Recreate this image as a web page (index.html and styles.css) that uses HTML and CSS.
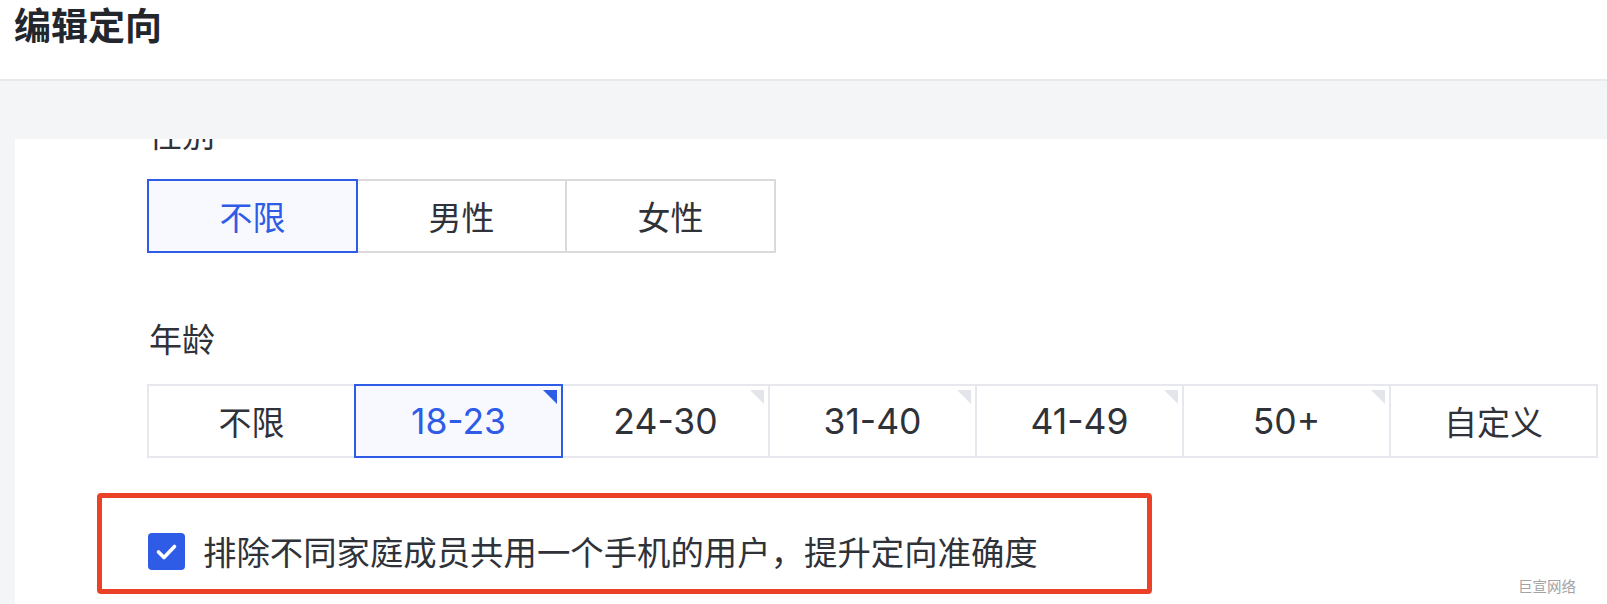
FILE: index.html
```html
<!DOCTYPE html>
<html lang="zh-CN">
<head>
<meta charset="utf-8">
<title>编辑定向</title>
<link rel="stylesheet" href="styles.css">
</head>
<body>
<header class="header">
  <h1 class="title">编辑定向</h1>
</header>
<main class="main">
  <section class="panel">
    <div class="field-label first">性别</div>
    <div class="btn-group gender">
      <div class="opt selected">不限</div>
      <div class="opt">男性</div>
      <div class="opt">女性</div>
    </div>
    <div class="field-label second">年龄</div>
    <div class="btn-group age">
      <div class="opt">不限</div>
      <div class="opt num selected tagged">18-23</div>
      <div class="opt num tagged">24-30</div>
      <div class="opt num tagged">31-40</div>
      <div class="opt num tagged">41-49</div>
      <div class="opt num tagged">50+</div>
      <div class="opt">自定义</div>
    </div>
    <div class="check-row">
      <span class="checkbox">
        <svg viewBox="0 0 37 37" width="37" height="37"><polyline points="10.5,19 16,24.5 26.5,13.5" fill="none" stroke="#fff" stroke-width="3.6" stroke-linecap="round" stroke-linejoin="round"/></svg>
      </span>
      <span class="check-text">排除不同家庭成员共用一个手机的用户，提升定向准确度</span>
    </div>
  </section>
  <div class="watermark">巨宣网络</div>
</main>
</body>
</html>
```
FILE: styles.css
```css
html, body {
  margin: 0;
  padding: 0;
  height: 100%;
  overflow: hidden;
}
body {
  background: #f4f5f7;
  font-family: "Noto Sans CJK SC", sans-serif;
  color: #2f3238;
  display: flex;
  flex-direction: column;
}
.header {
  background: #fff;
  height: 79px;
  border-bottom: 2px solid #e8e9ed;
  padding-left: 14px;
  flex: none;
}
.title {
  margin: 0;
  font-family: "Noto Sans CJK SC", sans-serif;
  font-size: 37px;
  font-weight: 700;
  line-height: 48px;
  color: #23262c;
}
.main {
  flex: 1;
  padding: 58px 0 0 15px;
  display: flex;
  position: relative;
  min-height: 0;
}
.panel {
  flex: 1;
  background: #fff;
  overflow: hidden;
  padding-left: 132px;
}
.field-label {
  font-size: 33px;
  line-height: 44px;
  color: #2f3238;
  padding-left: 2px;
}
.field-label.first {
  margin-top: -28px;
}
.field-label.second {
  margin-top: 63px;
}
.btn-group {
  display: flex;
  margin-top: 24px;
}
.opt {
  position: relative;
  box-sizing: border-box;
  height: 74px;
  border: 2px solid #e6e8ed;
  background: #fff;
  display: flex;
  align-items: center;
  justify-content: center;
  font-size: 33px;
  color: #2f3238;
  flex: none;
}
.opt.num {
  font-family: "Inter", "Noto Sans CJK SC", sans-serif;
  font-size: 35.5px;
}
.opt + .opt {
  margin-left: -2px;
}
.gender .opt {
  width: 211px;
  border-color: #dadadd;
}
.age .opt {
  width: 209px;
}
.opt.selected {
  border-color: #2f5ce6;
  background: #f7f9ff;
  color: #2f5ce6;
  z-index: 1;
}
.opt.tagged::after {
  content: "";
  position: absolute;
  top: 4px;
  right: 4px;
  width: 0;
  height: 0;
  border-top: 14px solid #e3e5ea;
  border-left: 14px solid transparent;
}
.opt.selected.tagged::after {
  border-top-color: #2f5ce6;
}
.check-row {
  margin-top: 35px;
  margin-left: -50px;
  width: 1055px;
  box-sizing: border-box;
  border: 5px solid #eb4127;
  border-radius: 4px;
  padding: 31px 0 16px 46px;
  display: flex;
  align-items: center;
}
.checkbox {
  width: 37px;
  height: 37px;
  border-radius: 4px;
  background: #2f5ce6;
  display: flex;
  flex: none;
}
.check-text {
  margin-left: 18px;
  font-size: 33.4px;
  line-height: 44px;
  color: #2f3238;
}
.watermark {
  position: absolute;
  right: 31px;
  bottom: 10px;
  font-size: 14.5px;
  line-height: 16px;
  color: #a3a3a3;
}
```
